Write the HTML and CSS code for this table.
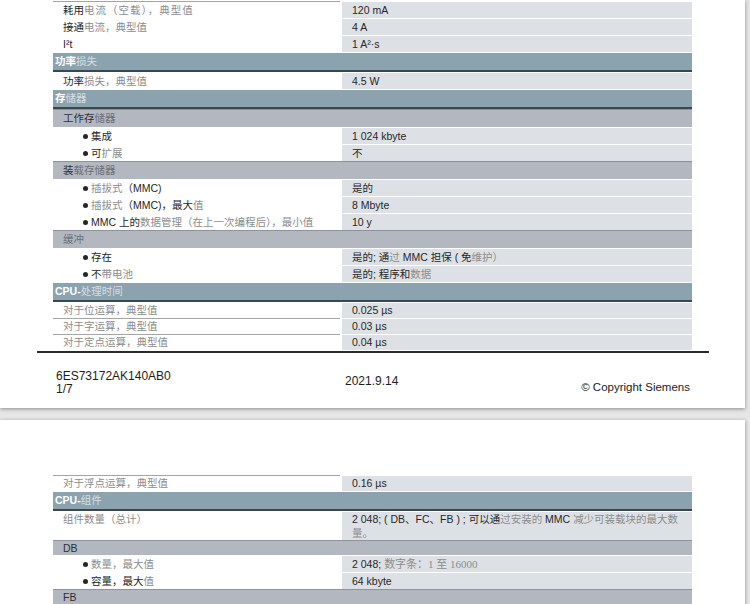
FILE: index.html
```html
<!doctype html>
<html lang="zh">
<head>
  <meta charset="UTF-8">
  <meta name="viewport" content="width=device-width, initial-scale=1.0">
  <title>6ES73172AK140AB0 技术数据</title>
  <link rel="stylesheet" href="styles.css">
</head>
<body>

<div class="Sheet Sheet--first">
  <table class="Spec">
    <colgroup><col class="Spec-colLabel"><col class="Spec-colValue"></colgroup>
    <tr class="Spec-row is-ruled">
      <td class="Spec-label">耗用<span class="lt wide">电流（空载），典型值</span></td>
      <td class="Spec-value">120 mA</td>
    </tr>
    <tr class="Spec-row">
      <td class="Spec-label">接通<span class="lt">电流，典型值</span></td>
      <td class="Spec-value">4 A</td>
    </tr>
    <tr class="Spec-row">
      <td class="Spec-label">I²t</td>
      <td class="Spec-value">1 A²·s</td>
    </tr>
    <tr class="Spec-section">
      <th colspan="2"><b>功率</b><span class="lt">损失</span></th>
    </tr>
    <tr class="Spec-row">
      <td class="Spec-label">功率<span class="lt">损失，典型值</span></td>
      <td class="Spec-value">4.5 W</td>
    </tr>
    <tr class="Spec-section">
      <th colspan="2"><b>存</b><span class="lt">储器</span></th>
    </tr>
    <tr class="Spec-group">
      <td colspan="2">工作存<span class="lt">储器</span></td>
    </tr>
    <tr class="Spec-row">
      <td class="Spec-label is-item">集成</td>
      <td class="Spec-value">1 024 kbyte</td>
    </tr>
    <tr class="Spec-row">
      <td class="Spec-label is-item">可<span class="lt">扩展</span></td>
      <td class="Spec-value">不</td>
    </tr>
    <tr class="Spec-group">
      <td colspan="2">装<span class="lt">载存储器</span></td>
    </tr>
    <tr class="Spec-row">
      <td class="Spec-label is-item"><span class="lt">插拔式</span>（MMC)</td>
      <td class="Spec-value">是的</td>
    </tr>
    <tr class="Spec-row">
      <td class="Spec-label is-item"><span class="lt">插拔式</span>（MMC)，最大<span class="lt">值</span></td>
      <td class="Spec-value">8 Mbyte</td>
    </tr>
    <tr class="Spec-row">
      <td class="Spec-label is-item">MMC 上的<span class="lt">数据管理（在上一次编程后），最小值</span></td>
      <td class="Spec-value">10 y</td>
    </tr>
    <tr class="Spec-group">
      <td colspan="2"><span class="lt">缓冲</span></td>
    </tr>
    <tr class="Spec-row">
      <td class="Spec-label is-item">存在</td>
      <td class="Spec-value">是的; 通<span class="lt">过</span> MMC 担保 ( 免<span class="lt">维护）</span></td>
    </tr>
    <tr class="Spec-row">
      <td class="Spec-label is-item">不<span class="lt">带电池</span></td>
      <td class="Spec-value">是的; 程序和<span class="lt">数据</span></td>
    </tr>
    <tr class="Spec-section">
      <th colspan="2"><b>CPU-</b><span class="lt">处理时间</span></th>
    </tr>
    <tr class="Spec-row is-tight">
      <td class="Spec-label"><span class="lt">对于位运算，典型值</span></td>
      <td class="Spec-value">0.025 µs</td>
    </tr>
    <tr class="Spec-row is-tight is-ruled">
      <td class="Spec-label"><span class="lt">对于字运算，典型值</span></td>
      <td class="Spec-value">0.03 µs</td>
    </tr>
    <tr class="Spec-row is-tight is-ruled">
      <td class="Spec-label"><span class="lt">对于定点运算，典型值</span></td>
      <td class="Spec-value">0.04 µs</td>
    </tr>
  </table>

  <footer class="Sheet-foot">
    <div class="Sheet-footId">6ES73172AK140AB0<br>1/7</div>
    <div class="Sheet-footDate">2021.9.14</div>
    <div class="Sheet-footCopy">© Copyright Siemens</div>
  </footer>
</div>

<div class="Sheet Sheet--next">
  <table class="Spec">
    <colgroup><col class="Spec-colLabel"><col class="Spec-colValue"></colgroup>
    <tr class="Spec-row is-tight is-ruled">
      <td class="Spec-label"><span class="lt">对于浮点运算，典型值</span></td>
      <td class="Spec-value">0.16 µs</td>
    </tr>
    <tr class="Spec-section">
      <th colspan="2"><b>CPU-</b><span class="lt">组件</span></th>
    </tr>
    <tr class="Spec-row is-multi">
      <td class="Spec-label"><span class="lt">组件数量（总计）</span></td>
      <td class="Spec-value">2 048; ( DB、FC、FB ) ; 可以通<span class="lt">过安装的</span> MMC <span class="lt">减少可装载块的最大数</span><span class="lt">量。</span></td>
    </tr>
    <tr class="Spec-group">
      <td colspan="2">DB</td>
    </tr>
    <tr class="Spec-row">
      <td class="Spec-label is-item"><span class="lt">数量，最大值</span></td>
      <td class="Spec-value">2 048; <span class="lt serif">数字条：1 至 16000</span></td>
    </tr>
    <tr class="Spec-row">
      <td class="Spec-label is-item">容量，最大<span class="lt">值</span></td>
      <td class="Spec-value">64 kbyte</td>
    </tr>
    <tr class="Spec-group">
      <td colspan="2">FB</td>
    </tr>
  </table>
</div>

</body>
</html>
```

FILE: styles.css
```css
html,
body {
  overflow: hidden;
}

body {
  margin: 0;
  background-color: #e6e6e6;
  color: #262626;
  font-family: "Liberation Sans", "Noto Sans CJK SC", sans-serif;
  font-size: 10.5px;
}

.Sheet {
  box-sizing: border-box;
  width: 745px;
  background-color: #fff;
  box-shadow: 0 1px 4px rgba(0, 0, 0, 0.4);
}

.Sheet--first {
  height: 408px;
  padding-top: 1px;
}

.Sheet--next {
  height: 300px;
  margin-top: 12px;
  padding-top: 55px;
}

/* spec table */

.Spec {
  width: 639px;
  margin-left: 53px;
  border-collapse: separate;
  border-spacing: 0;
  table-layout: fixed;
}

.Spec-colLabel {
  width: 287px;
}

.Spec-colValue {
  width: 352px;
}

.Spec td {
  padding: 0 10px;
  border-top: 1px solid #fff;
  line-height: 16px;
  vertical-align: top;
  text-align: left;
}

.Spec-label {
  white-space: nowrap;
}

.Spec-value {
  background-color: #dde1e5;
  border-left: 2px solid #fff;
}

.Spec-row.is-ruled > .Spec-label {
  border-top-color: #a4a4a4;
}

.Spec-row.is-tight > td {
  line-height: 15px;
}

.Spec-row.is-multi > td {
  line-height: 14px;
}

.Spec-label.is-item {
  padding-left: 30px;
}

.Spec-label.is-item::before {
  display: inline-block;
  width: 5px;
  height: 5px;
  margin-right: 3px;
  border-radius: 50%;
  background-color: #262626;
  vertical-align: 1px;
  content: "";
}

.Spec-section th {
  padding: 0 2px;
  border-top: 1px solid #fff;
  border-bottom: 2px solid #3b4750;
  background-color: #8ba3ae;
  color: #fff;
  font-weight: normal;
  line-height: 17px;
  text-align: left;
}

.Spec-section b {
  font-weight: bold;
}

.Spec-section .lt {
  color: #d6dfe3;
}

.Spec-group td {
  border-top: 1px solid #8d939c;
  background-color: #b2b7c0;
  color: #2e3035;
  line-height: 17px;
}

.Sheet--next .Spec-group td {
  line-height: 14px;
}

.Spec-group .lt {
  color: #6c7079;
}

.lt {
  color: #8c8c8c;
}

.lt.wide {
  letter-spacing: 1px;
}

.serif {
  font-family: "Liberation Serif", "Noto Sans CJK SC", serif;
  font-size: 11px;
}

/* footer */

.Sheet-foot {
  display: flex;
  align-items: flex-start;
  width: 672px;
  box-sizing: border-box;
  margin: 1px 0 0 37px;
  padding: 17px 19px 0;
  border-top: 2px solid #2a2a2a;
  color: #1c1c1c;
  font-size: 12px;
  line-height: 13px;
}

.Sheet-footId {
  width: 289px;
}

.Sheet-footDate {
  margin-top: 5px;
}

.Sheet-footCopy {
  margin-top: 11px;
  margin-left: auto;
  font-size: 11.5px;
}
```
